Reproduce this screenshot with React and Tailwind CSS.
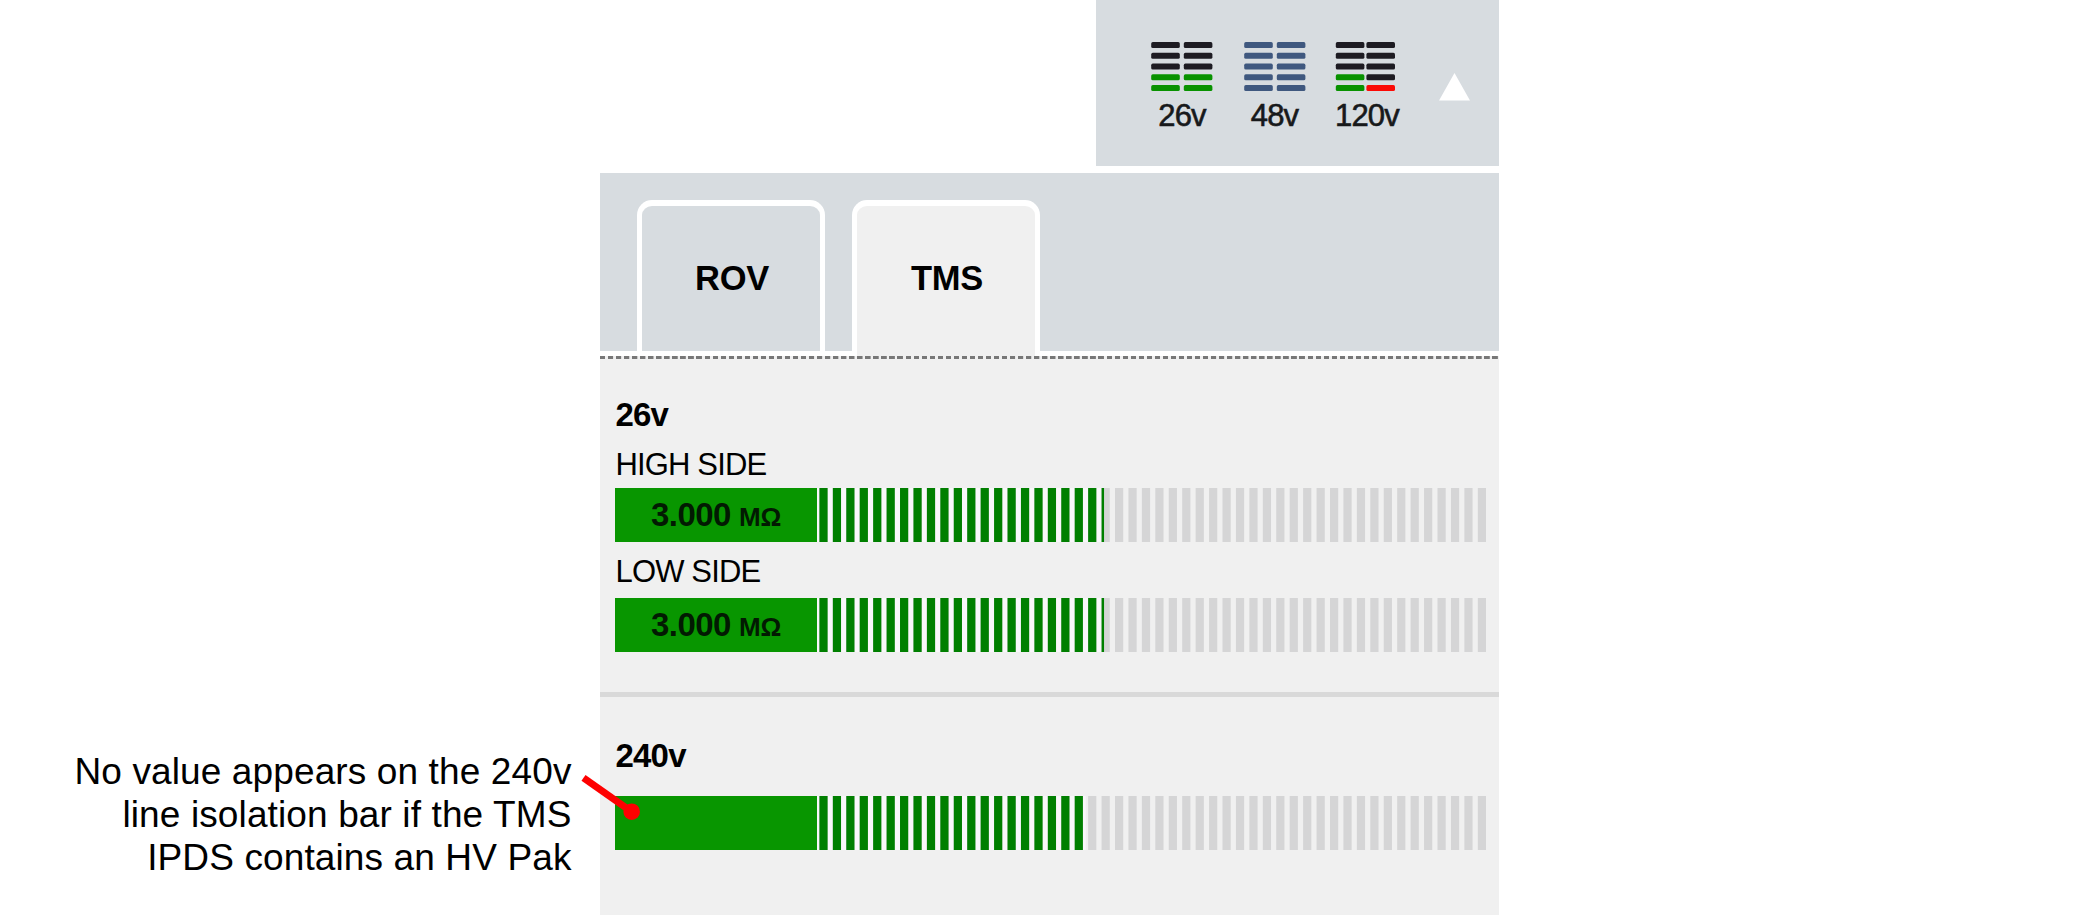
import React from "react";

const BLACK = "#1d1b22";
const GREEN = "#089200";
const BLUE = "#3f587f";
const RED = "#fb0a06";

const SUPPLIES = [
  { label: "26v", start: 0.2, step: 32.6, cols: [[BLACK, BLACK, BLACK, GREEN, GREEN], [BLACK, BLACK, BLACK, GREEN, GREEN]] },
  { label: "48v", start: 0.2, step: 32.6, cols: [[BLUE, BLUE, BLUE, BLUE, BLUE], [BLUE, BLUE, BLUE, BLUE, BLUE]] },
  { label: "120v", start: -0.2, step: 30.6, cols: [[BLACK, BLACK, BLACK, GREEN, GREEN], [BLACK, BLACK, BLACK, BLACK, RED]] },
];

function Supply({ supply }) {
  return (
    <div className="flex w-[62px] flex-col items-center">
      <svg className="block h-[51px] w-[62px] overflow-visible" viewBox="0 0 62 51">
        {supply.cols.map((col, c) =>
          col.map((fill, r) => (
            <rect key={`${c}-${r}`} x={supply.start + c * supply.step} y={0.1 + r * 10.75} width="28.6" height="6" rx="1.6" fill={fill} />
          ))
        )}
      </svg>
      <span className="mt-[6px] text-[31px] leading-[34px] tracking-[-0.8px] whitespace-nowrap text-[#17191b] [-webkit-text-stroke:0.6px_#17191b]">
        {supply.label}
      </span>
    </div>
  );
}

function Tab({ label, active }) {
  return (
    <div
      className={`flex w-[188px] justify-center rounded-t-[15px] border-x-[5px] border-t-[6px] border-white pt-[53px] pl-[2px] text-[34.5px] leading-[38px] font-bold tracking-[-0.3px] text-black ${
        active ? "h-[156px] bg-[#f0f0f0]" : "h-[151px] bg-[#d7dce0]"
      }`}
    >
      {label}
    </div>
  );
}

const SEGMENTS = Array.from({ length: 50 }, (_, i) => i);

function Meter({ value, filled }) {
  return (
    <div className="flex h-[54px] w-[871px]">
      <div className="flex w-[202px] items-center justify-center bg-[#089600] pb-[2px] text-[#021a02]">
        {value && (
          <span className="flex items-baseline gap-[8px] leading-none font-bold">
            <span className="text-[33px] tracking-[-0.5px]">{value}</span>
            <span className="text-[26px] tracking-[-0.2px]">MΩ</span>
          </span>
        )}
      </div>
      <svg className="block h-[54px] w-[669px]" viewBox="0 0 669 54">
        <rect x="0" y="0" width={filled * 13.437} height="54" fill="#f9f7fa" />
        {SEGMENTS.map((i) => {
          const x = 2.4 + i * 13.437;
          const part = Math.max(0, Math.min(1, filled - i));
          return (
            <g key={i}>
              <rect x={x} y="0" width="8.2" height="54" fill="#d5d5d6" />
              {part > 0 && <rect x={x} y="0" width={8.2 * part} height="54" fill="#007f00" />}
            </g>
          );
        })}
      </svg>
    </div>
  );
}

export default function App() {
  return (
    <div className="relative flex h-[916px] w-[2100px] overflow-hidden bg-white font-['Liberation_Sans',Arial,sans-serif] text-black">
      <div className="flex w-[600px] shrink-0 flex-col items-end pt-[750px] pr-[28.5px]">
        <p className="text-right text-[37px] leading-[43px] tracking-[0.12px] whitespace-nowrap">
          No value appears on the 240v
          <br />
          line isolation bar if the TMS
          <br />
          IPDS contains an HV Pak
        </p>
      </div>

      <div className="flex w-[899px] shrink-0 flex-col">
        <header className="flex h-[165.5px] w-[403px] self-end bg-[#d7dce0] pt-[42px] pl-[55px]">
          <div className="flex gap-[30.5px]">
            {SUPPLIES.map((s) => (
              <Supply key={s.label} supply={s} />
            ))}
          </div>
          <svg className="mt-[31px] ml-[41px] block h-[28px] w-[31px]" viewBox="0 0 31 28">
            <path d="M15.5 0 31 27.5H0z" fill="#fff" />
          </svg>
        </header>

        <section className="mt-[7.5px] flex h-[742px] flex-col bg-[#f0f0f0]">
          <nav className="flex h-[183px] items-start gap-[27px] bg-[linear-gradient(#d7dce0_178px,#fff_178px)] pt-[27px] pl-[37px]">
            <Tab label="ROV" />
            <Tab label="TMS" active />
          </nav>
          <div className="h-[3px] bg-[repeating-linear-gradient(90deg,#777_0,#777_5px,#f0f0f0_5.5px,#f0f0f0_8.04px)]" />

          <div className="flex h-[338px] flex-col border-b-[5px] border-[#d9d9d9] pl-[15px]">
            <h2 className="mt-[38px] h-[36px] pl-[0.5px] text-[33px] leading-[35px] font-bold tracking-[-0.8px]">26v</h2>
            <div className="mt-[14px] mb-[6px] h-[35px] pl-[0.5px] text-[31px] leading-[35px] tracking-[-0.85px]">HIGH SIDE</div>
            <Meter value="3.000" filled={21.3} />
            <div className="mt-[12px] mb-[9px] h-[35px] pl-[0.5px] text-[31px] leading-[35px] tracking-[-0.85px]">LOW SIDE</div>
            <Meter value="3.000" filled={21.3} />
          </div>

          <div className="flex flex-col pl-[15px]">
            <h2 className="mt-[41px] mb-[22px] h-[36px] pl-[0.5px] text-[33px] leading-[35px] font-bold tracking-[-0.8px]">240v</h2>
            <Meter filled={20} />
          </div>
        </section>
      </div>

      <svg className="absolute top-[765px] left-[540px] h-[60px] w-[110px]" viewBox="0 0 110 60">
        <line x1="43.5" y1="12.8" x2="91.5" y2="46.7" stroke="#fe0000" strokeWidth="7" />
        <circle cx="91.7" cy="46.7" r="8.3" fill="#fe0000" />
      </svg>
    </div>
  );
}
